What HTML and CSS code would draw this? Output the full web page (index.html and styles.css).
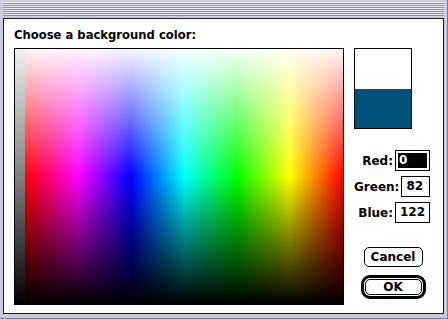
FILE: index.html
```html
<!DOCTYPE html>
<html>
<head>
<meta charset="utf-8">
<link rel="stylesheet" href="styles.css">
</head>
<body>
<div class="window">
  <div class="titlebar"></div>
  <div class="content">
    <h1 class="prompt">Choose a background color:</h1>
    <div class="main">
      <div class="picker">
        <div class="gray"></div>
        <div class="hues"><div class="shade"></div></div>
      </div>
      <div class="side">
        <div class="swatch"><div class="old"></div><div class="new"></div></div>
        <div class="fields">
          <div class="row"><span class="label">Red:</span><div class="field"><span class="sel">0</span></div></div>
          <div class="row"><span class="label">Green:</span><div class="field"><span class="val">82</span></div></div>
          <div class="row"><span class="label">Blue:</span><div class="field"><span class="val">122</span></div></div>
        </div>
        <div class="buttons">
          <button class="btn cancel">Cancel</button>
          <div class="default"><button class="btn ok">OK</button></div>
        </div>
      </div>
    </div>
  </div>
</div>
</body>
</html>
```
FILE: styles.css
```css
html, body {
  margin: 0;
  padding: 0;
}
body {
  width: 448px;
  height: 319px;
  overflow: hidden;
  font-family: "DejaVu Sans", sans-serif;
  background: #ccccdd;
}
.window {
  box-sizing: border-box;
  width: 448px;
  height: 319px;
  background: #ccccdd;
  display: flex;
  flex-direction: column;
  padding: 0 3px 4px 3px;
  border-right: 1px solid #7a7a90;
  border-bottom: 1px solid #7a7a90;
}
.titlebar {
  height: 18px;
  flex: none;
  background-image: repeating-linear-gradient(to bottom, #ececf4 0 1px, #8c8c9c 1px 2px);
  background-size: 100% 14px;
  background-position: 0 2px;
  background-repeat: no-repeat;
}
.content {
  flex: 1;
  background: #fff;
  border: 1px solid #1a1a1a;
  padding: 9px 12px 0 10px;
  display: flex;
  flex-direction: column;
}
.prompt {
  margin: 0;
  font-size: 11.6px;
  font-weight: bold;
  line-height: 14px;
  color: #000;
}
.main {
  display: flex;
  margin-top: 6px;
}
.picker {
  box-sizing: border-box;
  width: 330px;
  height: 257px;
  border: 1px solid #000;
  display: flex;
}
.gray {
  width: 10px;
  background: linear-gradient(to bottom, #f0f0f0, #808080 50%, #000);
}
.hues {
  flex: 1;
  background: linear-gradient(to right, #ff0000, #ff00ff 16.7%, #0000ff 33.3%, #00ffff 50%, #00ff00 66.7%, #ffff00 83.3%, #ff0000);
  display: flex;
}
.shade {
  flex: 1;
  background: linear-gradient(to bottom, rgba(255,255,255,0.96) 0%, rgba(255,255,255,0) 50%, rgba(0,0,0,0) 50%, #000 100%);
}
.side {
  margin-left: 10px;
  width: 76px;
  display: flex;
  flex-direction: column;
}
.swatch {
  box-sizing: border-box;
  width: 58px;
  height: 81px;
  border: 1px solid #000;
  display: flex;
  flex-direction: column;
}
.old {
  height: 40px;
  background: #fff;
}
.new {
  flex: 1;
  background: #00527a;
}
.fields {
  margin-top: 21px;
  display: flex;
  flex-direction: column;
  gap: 5px;
}
.row {
  display: flex;
  justify-content: flex-end;
  align-items: center;
  height: 21px;
}
.label {
  font-size: 12px;
  font-weight: bold;
  margin-right: 2px;
}
.field {
  box-sizing: border-box;
  width: 35px;
  height: 21px;
  border: 1px solid #000;
  padding: 2px;
  display: flex;
  font-size: 12px;
  font-weight: bold;
}
.sel {
  flex: 1;
  background: #000;
  color: #fff;
  padding-left: 1px;
  line-height: 15px;
}
.val {
  padding-left: 2px;
  line-height: 15px;
}
.buttons {
  margin-top: 24px;
  display: flex;
  flex-direction: column;
  align-items: center;
  gap: 8px;
  padding-left: 2px;
}
.btn {
  box-sizing: border-box;
  background: #fff;
  color: #000;
  border: 1px solid #000;
  font-family: "DejaVu Sans", sans-serif;
  font-size: 12px;
  font-weight: bold;
  padding: 0;
  margin: 0;
}
.cancel {
  width: 59px;
  height: 20px;
  border-radius: 5px;
}
.default {
  border: 3px solid #000;
  border-radius: 9px;
  padding: 1px;
  display: flex;
}
.ok {
  width: 57px;
  height: 16px;
  border-radius: 5px;
  line-height: 14px;
}
```
